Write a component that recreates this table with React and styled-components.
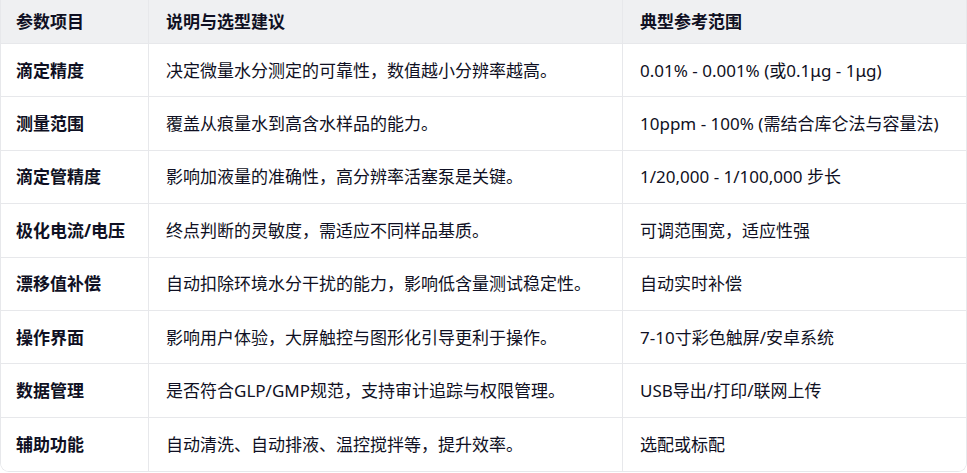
import React from "react";
import styled, { createGlobalStyle } from "styled-components";

const Global = createGlobalStyle`
  html, body { margin: 0; padding: 0; background: #ffffff; }
  body { font-family: "Noto Sans", "Noto Sans CJK SC", sans-serif; }
`;

const Table = styled.div`
  width: 967px;
  box-sizing: border-box;
  display: grid;
  grid-template-columns: 147px 474px 1fr;
  border: 1px solid #e7e8eb;
  border-top: none;
  border-radius: 0 0 9px 9px;
  overflow: hidden;
  color: #0f1023;
  font-size: 17px;
  line-height: 25px;
`;

const Cell = styled.div`
  box-sizing: border-box;
  height: ${(p) => (p.$head ? "44px" : "53.4px")};
  padding: 0 17px;
  padding-left: ${(p) => (p.$first ? "15px" : "17px")};
  background: ${(p) => (p.$head ? "#eff0f2" : "#ffffff")};
  font-weight: ${(p) => (p.$bold ? 700 : 400)};
  border-bottom: ${(p) => (p.$last ? "none" : "1px solid #e7e8eb")};
  border-left: ${(p) => (p.$first ? "none" : "1px solid #e7e8eb")};
  white-space: nowrap;
  display: flex;
  align-items: center;
`;

const head = ["参数项目", "说明与选型建议", "典型参考范围"];
const rows = [
  ["滴定精度", "决定微量水分测定的可靠性，数值越小分辨率越高。", "0.01% - 0.001% (或0.1μg - 1μg)"],
  ["测量范围", "覆盖从痕量水到高含水样品的能力。", "10ppm - 100% (需结合库仑法与容量法)"],
  ["滴定管精度", "影响加液量的准确性，高分辨率活塞泵是关键。", "1/20,000 - 1/100,000 步长"],
  ["极化电流/电压", "终点判断的灵敏度，需适应不同样品基质。", "可调范围宽，适应性强"],
  ["漂移值补偿", "自动扣除环境水分干扰的能力，影响低含量测试稳定性。", "自动实时补偿"],
  ["操作界面", "影响用户体验，大屏触控与图形化引导更利于操作。", "7-10寸彩色触屏/安卓系统"],
  ["数据管理", "是否符合GLP/GMP规范，支持审计追踪与权限管理。", "USB导出/打印/联网上传"],
  ["辅助功能", "自动清洗、自动排液、温控搅拌等，提升效率。", "选配或标配"],
];

export default function App() {
  return (
    <>
      <Global />
      <Table>
        {head.map((h, i) => (
          <Cell key={h} $head $bold $first={i === 0}>
            {h}
          </Cell>
        ))}
        {rows.map((r, ri) =>
          r.map((c, ci) => (
            <Cell
              key={ri + "-" + ci}
              $bold={ci === 0}
              $first={ci === 0}
              $last={ri === rows.length - 1}
            >
              {c}
            </Cell>
          ))
        )}
      </Table>
    </>
  );
}
